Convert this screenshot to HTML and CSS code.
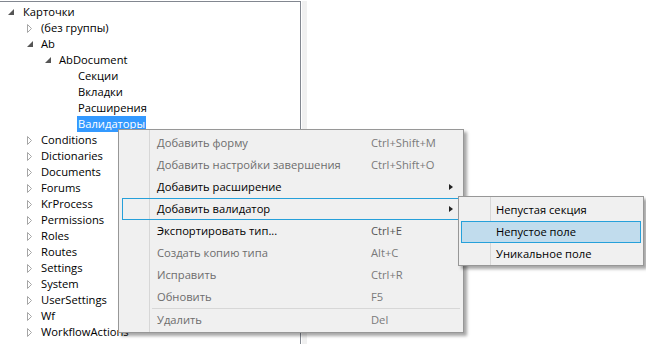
FILE: index.html
```html
<!DOCTYPE html>
<html lang="ru">
<head>
  <meta charset="UTF-8">
  <meta name="viewport" content="width=device-width, initial-scale=1.0">
  <title>Карточки</title>
  <link rel="stylesheet" href="styles.css">
</head>
<body>

  <!-- Window with tree and empty pane -->
  <div class="window">
    <div class="tree">
      <ul class="tree-list">
        <li class="node level-0"><span class="toggle"><svg width="6" height="6" viewBox="0 0 6 6"><polygon points="6,0 6,6 0,6" fill="#555"/></svg></span><span class="label">Карточки</span></li>
        <li class="node level-1"><span class="toggle"><svg width="6" height="9" viewBox="0 0 6 9"><polygon points="0.5,0.5 4.5,4.5 0.5,8.5" fill="none" stroke="#a6a6a6"/></svg></span><span class="label">(без группы)</span></li>
        <li class="node level-1"><span class="toggle"><svg width="6" height="6" viewBox="0 0 6 6"><polygon points="6,0 6,6 0,6" fill="#555"/></svg></span><span class="label">Ab</span></li>
        <li class="node level-2"><span class="toggle"><svg width="6" height="6" viewBox="0 0 6 6"><polygon points="6,0 6,6 0,6" fill="#555"/></svg></span><span class="label">AbDocument</span></li>
        <li class="node level-3"><span class="toggle"></span><span class="label">Секции</span></li>
        <li class="node level-3"><span class="toggle"></span><span class="label">Вкладки</span></li>
        <li class="node level-3"><span class="toggle"></span><span class="label">Расширения</span></li>
        <li class="node level-3"><span class="toggle"></span><span class="label selected">Валидаторы</span></li>
      </ul>
      <ul class="tree-list" id="groups"></ul>
    </div>
    <div class="splitter"></div>
    <div class="pane"></div>
  </div>

  <!-- Context menu -->
  <div class="menu context-menu">
    <div class="item disabled"><span>Добавить форму</span><span class="shortcut">Ctrl+Shift+M</span><span></span></div>
    <div class="item disabled"><span>Добавить настройки завершения</span><span class="shortcut">Ctrl+Shift+O</span><span></span></div>
    <div class="item"><span>Добавить расширение</span><span class="shortcut"></span><span class="arrow"></span></div>
    <div class="item open"><span>Добавить валидатор</span><span class="shortcut"></span><span class="arrow"></span></div>
    <div class="item"><span>Экспортировать тип...</span><span class="shortcut">Ctrl+E</span><span></span></div>
    <div class="item disabled"><span>Создать копию типа</span><span class="shortcut">Alt+C</span><span></span></div>
    <div class="item disabled"><span>Исправить</span><span class="shortcut">Ctrl+R</span><span></span></div>
    <div class="item disabled"><span>Обновить</span><span class="shortcut">F5</span><span></span></div>
    <div class="separator"></div>
    <div class="item disabled"><span>Удалить</span><span class="shortcut">Del</span><span></span></div>
  </div>

  <!-- Submenu -->
  <div class="menu submenu">
    <div class="item"><span>Непустая секция</span></div>
    <div class="item hover"><span>Непустое поле</span></div>
    <div class="item"><span>Уникальное поле</span></div>
  </div>

  <script>
    // Collapsed card groups
    const groups = ["Conditions", "Dictionaries", "Documents", "Forums", "KrProcess",
      "Permissions", "Roles", "Routes", "Settings", "System", "UserSettings", "Wf",
      "WorkflowActions", "WorkflowEngine"];

    const list = document.getElementById("groups");
    groups.forEach(name => {
      const li = document.createElement("li");
      li.className = "node level-1";
      li.innerHTML = `<span class="toggle"><svg width="6" height="9" viewBox="0 0 6 9"><polygon points="0.5,0.5 4.5,4.5 0.5,8.5" fill="none" stroke="#a6a6a6"/></svg></span><span class="label">${name}</span>`;
      list.appendChild(li);
    });
  </script>

</body>
</html>
```

FILE: styles.css
```css
/* General Styling */
* {
  margin: 0;
  padding: 0;
  box-sizing: border-box;
}

body {
  font-family: "Open Sans", "Noto Sans", sans-serif;
  font-size: 11.2px;
  color: #000;
  background-color: #fff;
  width: 646px;
  height: 344px;
  overflow: hidden;
}

/* Window */
.window {
  display: flex;
  height: 344px;
  padding-top: 1px;
}

.tree {
  width: 301px;
  border-top: 1px solid #828790;
  border-right: 1px solid #828790;
  padding-top: 2px;
  overflow: hidden;
}

.splitter {
  width: 5px;
  margin-left: 1px;
  background-color: #f0f0f0;
}

.pane {
  flex: 1;
}

/* Tree */
.tree-list {
  list-style: none;
}

.node {
  display: flex;
  align-items: center;
  height: 16px;
  white-space: nowrap;
}

.level-0 { padding-left: 8px; }
.level-1 { padding-left: 27px; }
.level-2 { padding-left: 45px; }
.level-3 { padding-left: 64px; }

.toggle {
  width: 13px;
  display: flex;
  align-items: center;
}

.level-0 .toggle {
  width: 14px;
}

.label {
  padding: 0 1px;
  line-height: 16px;
}

.label.selected {
  background-color: #3399ff;
  color: #fff;
}

/* Menus */
.menu {
  position: absolute;
  background-color: #f0f0f0;
  border: 1px solid #979797;
  box-shadow: 3px 3px 3px rgba(0, 0, 0, 0.35);
  background-image: linear-gradient(#d7d7d7, #d7d7d7);
  background-size: 1px 100%;
  background-repeat: no-repeat;
  background-position: 30px 0;
}

.context-menu {
  left: 118px;
  top: 129px;
  width: 346px;
  padding: 2px 3px 1px;
}

.submenu {
  left: 458px;
  top: 196px;
  width: 186px;
  padding: 2px 2px 0;
  background-position: 31px 0;
}

.item {
  display: grid;
  grid-template-columns: 214px 1fr 10px;
  align-items: center;
  height: 22px;
  padding-left: 34px;
  padding-bottom: 1px;
  border: 1px solid transparent;
  white-space: nowrap;
}

.submenu .item {
  grid-template-columns: 1fr;
}

.item.disabled {
  color: #6d6d6d;
}

.shortcut {
  color: #555;
}

.item.disabled .shortcut {
  color: #7a7a7a;
}

.item.open {
  border-color: #26a0da;
}

.item.hover {
  border-color: #26a0da;
  background-color: #c1dced;
}

.arrow {
  width: 0;
  height: 0;
  border-top: 3.5px solid transparent;
  border-bottom: 3.5px solid transparent;
  border-left: 4px solid #222;
}

.separator {
  height: 1px;
  margin: 0 0 0 30px;
  background-color: #d7d7d7;
}
```
